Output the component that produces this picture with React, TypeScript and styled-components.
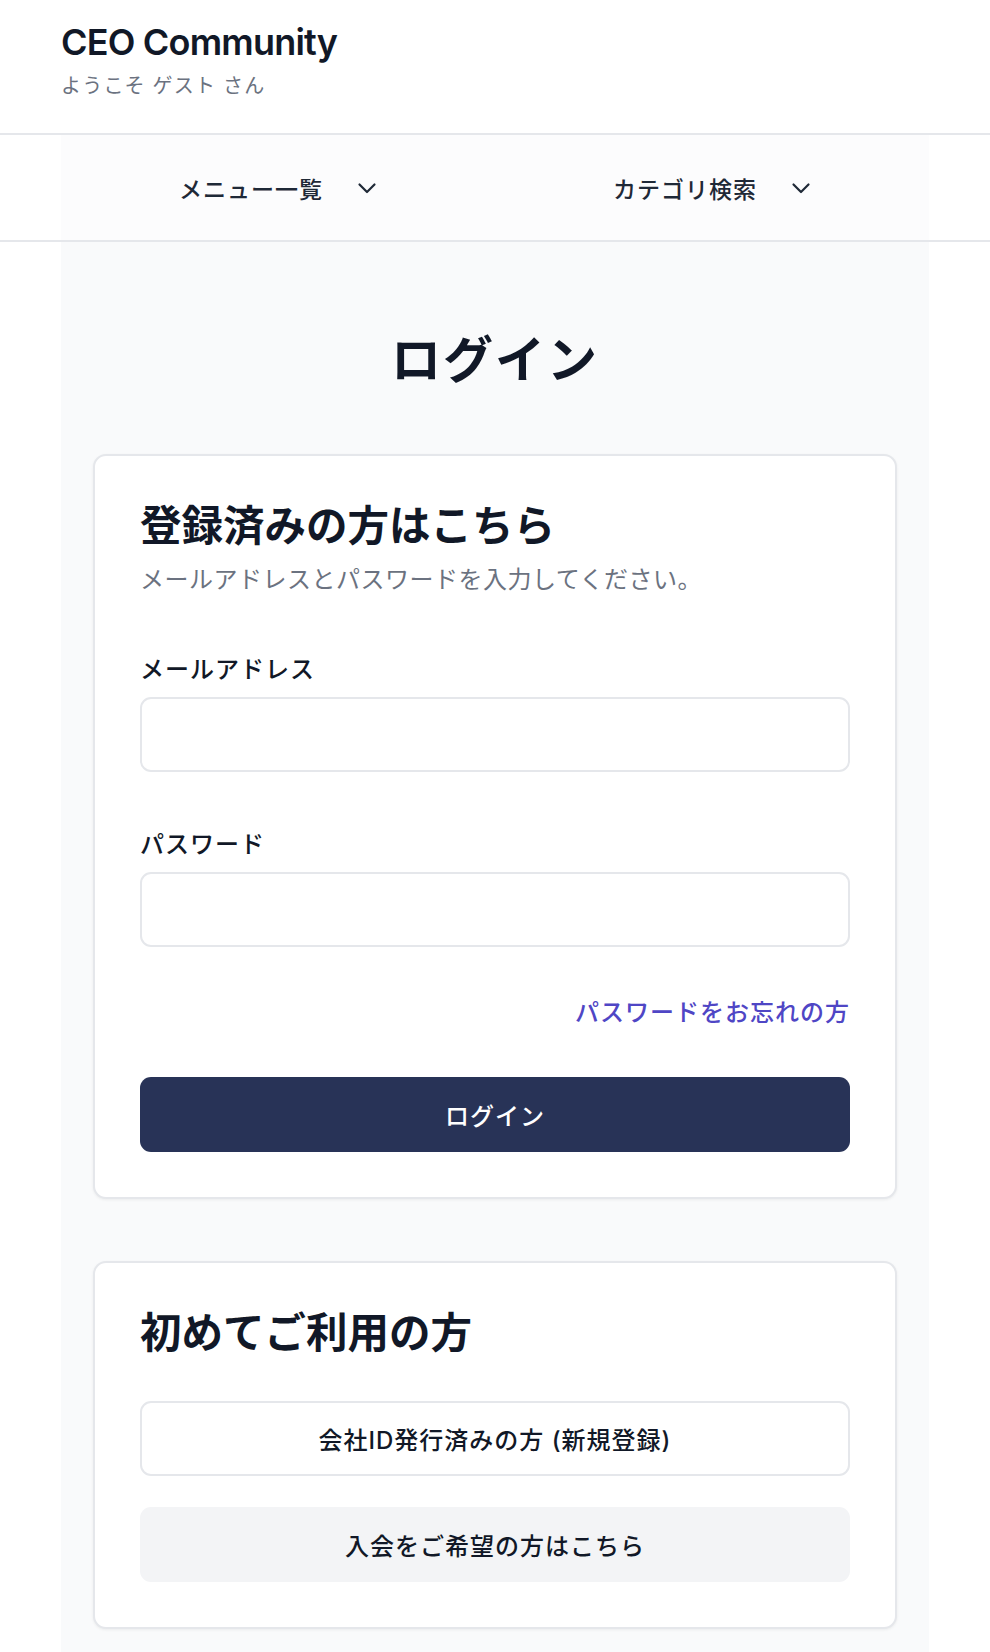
import styled, { createGlobalStyle } from 'styled-components';

const GlobalStyle = createGlobalStyle`
    * { box-sizing: border-box; }
    body {
        margin: 0;
        background: #ffffff;
        color: #111827;
        font-family: Inter, "Noto Sans CJK JP", sans-serif;
    }
`;

const Page = styled.div`
    min-height: 1652px;
    display: flex;
    flex-direction: column;
`;

const Header = styled.header`
    padding: 20px 61px 0;
    height: 135px;
    border-bottom: 2px solid #e5e7eb;
`;

const Brand = styled.h1`
    margin: 0;
    font-size: 36px;
    font-weight: 600;
    letter-spacing: -0.8px;
    line-height: 44px;
    color: #111827;
`;

const Welcome = styled.div`
    margin-top: 6px;
    font-size: 20px;
    color: #6b7280;
    letter-spacing: 1.2px;
`;

const Nav = styled.nav`
    height: 107px;
    border-bottom: 2px solid #e5e7eb;
    padding: 0 61px;
`;

const NavInner = styled.div`
    height: 100%;
    display: grid;
    grid-template-columns: 1fr 1fr;
    background: #fcfcfd;
`;

const NavItem = styled.button`
    border: 0;
    background: none;
    display: flex;
    align-items: center;
    justify-content: center;
    gap: 34px;
    font-family: inherit;
    font-size: 23px;
    font-weight: 500;
    color: #1f2937;
    letter-spacing: 1px;
`;

const Main = styled.main`
    flex: 1;
    margin: 0 61px;
    background: #f9fafb;
    padding: 86px 32px 24px;
`;

const PageTitle = styled.h2`
    margin: 0 0 62px;
    text-align: center;
    font-size: 50px;
    font-weight: 700;
    line-height: 64px;
    letter-spacing: 2px;
    color: #111827;
`;

const Card = styled.section`
    background: #ffffff;
    border: 2px solid #e5e7eb;
    border-radius: 13px;
    box-shadow: 0 1px 3px rgba(0, 0, 0, 0.06);
    padding: 42px 45px 45px;
    & + & { margin-top: 62px; }
`;

const CardTitle = styled.h3`
    margin: 0;
    font-size: 41.5px;
    font-weight: 700;
    line-height: 56px;
    color: #111827;
`;

const CardLead = styled.p`
    margin: 6px 0 0;
    font-size: 24px;
    color: #6b7280;
    letter-spacing: 0.5px;
`;

const Form = styled.form`
    margin-top: 55px;
    display: flex;
    flex-direction: column;
`;

const Label = styled.label`
    font-size: 24px;
    font-weight: 500;
    color: #111827;
    letter-spacing: 1px;
    margin-bottom: 12px;
`;

const Input = styled.input`
    height: 75px;
    border: 2px solid #e5e7eb;
    border-radius: 11px;
    background: #ffffff;
    font-size: 22px;
    padding: 0 18px;
    margin-bottom: 53px;
    &:last-of-type { margin-bottom: 46px; }
`;

const Forgot = styled.a`
    align-self: flex-end;
    font-size: 24px;
    font-weight: 500;
    color: #4f46c5;
    letter-spacing: 1px;
    text-decoration: none;
`;

const Button = styled.button<{ $variant: 'primary' | 'outline' | 'muted' }>`
    height: 75px;
    width: 100%;
    border-radius: 11px;
    font-family: inherit;
    font-size: 24px;
    font-weight: 500;
    letter-spacing: 1px;
    border: 2px solid ${p => (p.$variant === 'outline' ? '#e5e7eb' : 'transparent')};
    background: ${p => (p.$variant === 'primary' ? '#283357' : p.$variant === 'muted' ? '#f3f4f6' : '#ffffff')};
    color: ${p => (p.$variant === 'primary' ? '#ffffff' : '#111827')};
`;

const LoginButton = styled(Button)`
    margin-top: 49px;
`;

const ButtonStack = styled.div`
    margin-top: 40px;
    display: flex;
    flex-direction: column;
    gap: 31px;
`;

const Chevron = () => (
    <svg width="20" height="12" viewBox="0 0 20 12" fill="none" stroke="#1f2937" strokeWidth="2.2" strokeLinecap="round" strokeLinejoin="round">
        <path d="M2.5 2.5l7.5 7.5 7.5-7.5" />
    </svg>
);

export default function App() {
    return (
        <Page>
            <GlobalStyle />
            <Header>
                <Brand>CEO Community</Brand>
                <Welcome>ようこそ ゲスト さん</Welcome>
            </Header>
            <Nav>
                <NavInner>
                    <NavItem>メニュー一覧<Chevron /></NavItem>
                    <NavItem>カテゴリ検索<Chevron /></NavItem>
                </NavInner>
            </Nav>
            <Main>
                <PageTitle>ログイン</PageTitle>
                <Card>
                    <CardTitle>登録済みの方はこちら</CardTitle>
                    <CardLead>メールアドレスとパスワードを入力してください。</CardLead>
                    <Form onSubmit={e => e.preventDefault()}>
                        <Label htmlFor="email">メールアドレス</Label>
                        <Input id="email" type="email" />
                        <Label htmlFor="password">パスワード</Label>
                        <Input id="password" type="password" />
                        <Forgot href="#">パスワードをお忘れの方</Forgot>
                        <LoginButton type="submit" $variant="primary">ログイン</LoginButton>
                    </Form>
                </Card>
                <Card>
                    <CardTitle>初めてご利用の方</CardTitle>
                    <ButtonStack>
                        <Button $variant="outline">会社ID発行済みの方 (新規登録)</Button>
                        <Button $variant="muted">入会をご希望の方はこちら</Button>
                    </ButtonStack>
                </Card>
            </Main>
        </Page>
    );
}
